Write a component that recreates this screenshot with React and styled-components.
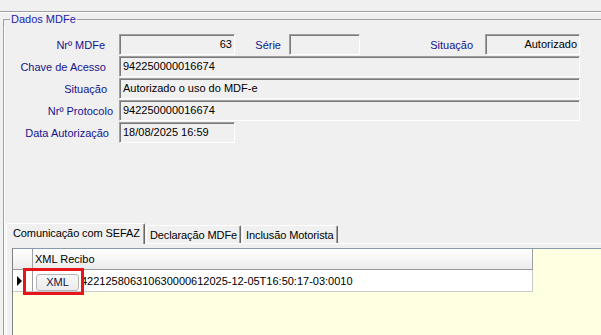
import styled, { createGlobalStyle } from "styled-components";

const GlobalStyle = createGlobalStyle`
  html, body {
    margin: 0;
    padding: 0;
    background: #f0f0f0;
  }
  body {
    font-family: "Liberation Sans", Arial, sans-serif;
    font-size: 11px;
    color: #000;
  }
`;

const Screen = styled.div`
  width: 601px;
  height: 335px;
  overflow: hidden;
  background: #f0f0f0;
  display: flex;
  flex-direction: column;
`;

const TopStrip = styled.div`
  flex: none;
  height: 11px;
  border-bottom: 1px solid #a0a0a0;
  box-shadow: 0 1px 0 #fff;
`;

const GroupBox = styled.fieldset`
  flex: none;
  margin: 1px 0 0 3px;
  padding: 0;
  width: 640px;
  min-width: 0;
  height: 340px;
  box-sizing: border-box;
  border: 1px solid #a0a0a0;
`;

const GroupTitle = styled.legend`
  margin-left: 6px;
  padding: 0 1px;
  line-height: 13px;
  color: #1c1cb0;
`;

const Body = styled.div`
  height: 314px;
  display: flex;
  flex-direction: column;
  border-left: 1px solid #fff;
`;

const Form = styled.div`
  margin-top: 8px;
  display: flex;
  flex-direction: column;
  gap: 1px;
`;

const Row = styled.div`
  display: flex;
  align-items: center;
  height: 21px;
`;

const Label = styled.span`
  flex: none;
  width: ${(p) => p.$w || 114}px;
  padding-right: ${(p) => p.$pr || 0}px;
  box-sizing: border-box;
  text-align: right;
  white-space: nowrap;
  color: #14148c;
`;

const Field = styled.div`
  flex: none;
  width: ${(p) => p.$w}px;
  height: 21px;
  box-sizing: border-box;
  padding: 0 2px 0 3px;
  border: 1px solid;
  border-color: #a0a0a0 #fff #fff #a0a0a0;
  box-shadow: inset 1px 1px 0 #7a7a7a;
  background: #f0f0f0;
  line-height: 19px;
  text-align: ${(p) => (p.$right ? "right" : "left")};
  white-space: nowrap;
  overflow: hidden;
`;

const TabControl = styled.div`
  flex: 1;
  margin: 79px 0 0 1px;
  display: flex;
  flex-direction: column;
`;

const TabStrip = styled.div`
  flex: none;
  display: flex;
  align-items: flex-end;
  height: 21px;
  gap: 1px;
`;

const Tab = styled.div`
  position: relative;
  z-index: ${(p) => (p.$active ? 2 : 1)};
  height: ${(p) => (p.$active ? 21 : 18)}px;
  padding: ${(p) => (p.$active ? "0 4px 0 6px" : "0 3px")};
  margin-bottom: ${(p) => (p.$active ? -1 : 0)}px;
  box-sizing: border-box;
  display: flex;
  align-items: center;
  padding-bottom: ${(p) => (p.$active ? 2 : 0)}px;
  border: 1px solid;
  border-bottom: none;
  border-color: #fff #696969 transparent #fff;
  box-shadow: inset -1px 0 0 #a0a0a0;
  border-radius: 2px 2px 0 0;
  background: #f0f0f0;
  white-space: nowrap;
  letter-spacing: -0.1px;
`;

const TabSheet = styled.div`
  flex: 1;
  display: flex;
  flex-direction: column;
  padding: 4px 0 0 5px;
  border-top: 1px solid #fff;
  border-left: 1px solid #fff;
`;

const Grid = styled.div`
  flex: 1;
  border-top: 1px solid #8a9aae;
  border-left: 1px solid #808080;
  background: #ffffe1;
`;

const GridTable = styled.div`
  width: 520px;
  display: flex;
  flex-direction: column;
`;

const HeaderRow = styled.div`
  display: flex;
  height: 21px;
  box-sizing: border-box;
  border-bottom: 1px solid #9a9a9a;
  border-right: 1px solid #a0a0a0;
  background: linear-gradient(#ffffff, #f4f4f4 60%, #ebebeb);
`;

const DataRow = styled.div`
  position: relative;
  display: flex;
  height: 22px;
  box-sizing: border-box;
  border-bottom: 1px solid #c8c8c8;
  border-right: 1px solid #c8c8c8;
  background: #fff;
`;

const IndicatorCell = styled.div`
  flex: none;
  width: 20px;
  border-right: 1px solid #a0a0a0;
  display: flex;
  align-items: center;
  padding-left: 4px;
  box-sizing: border-box;
`;

const HeaderCell = styled.div`
  flex: 1;
  padding-left: 2px;
  line-height: 20px;
`;

const DataCell = styled.div`
  flex: 1;
  display: flex;
  align-items: flex-start;
  padding: 4px 0 0 3px;
  white-space: nowrap;
  overflow: hidden;
`;

const XmlButton = styled.button`
  flex: none;
  width: 43px;
  height: 17px;
  margin: 0 2px 0 0;
  padding: 0;
  border: 1px solid #b4b4b4;
  border-radius: 3px;
  background: linear-gradient(#f7f7f7, #ececec);
  font-family: inherit;
  font-size: 11px;
  color: #101040;
  line-height: 15px;
`;

const CellText = styled.span`
  line-height: 15px;
`;

const Highlight = styled.div`
  position: absolute;
  left: 10px;
  top: -2px;
  width: 61px;
  height: 27px;
  box-sizing: border-box;
  border: 3px solid #e8141c;
  pointer-events: none;
`;

export default function App() {
  return (
    <>
      <GlobalStyle />
      <Screen>
        <TopStrip />
        <GroupBox>
          <GroupTitle>Dados MDFe</GroupTitle>
          <Body>
            <Form>
              <Row>
                <Label $pr={14}>Nrº MDFe</Label>
                <Field $w={116} $right>63</Field>
                <Label $w={54} $pr={8}>Série</Label>
                <Field $w={71} />
                <Label $w={125} $pr={12}>Situação</Label>
                <Field $w={95} $right>Autorizado</Field>
              </Row>
              <Row>
                <Label $pr={13}>Chave de Acesso</Label>
                <Field $w={461}>942250000016674</Field>
              </Row>
              <Row>
                <Label $pr={12}>Situação</Label>
                <Field $w={461}>Autorizado o uso do MDF-e</Field>
              </Row>
              <Row>
                <Label $pr={6}>Nrº Protocolo</Label>
                <Field $w={461}>942250000016674</Field>
              </Row>
              <Row>
                <Label $pr={10}>Data Autorização</Label>
                <Field $w={116}>18/08/2025 16:59</Field>
              </Row>
            </Form>

            <TabControl>
              <TabStrip>
                <Tab $active>Comunicação com SEFAZ</Tab>
                <Tab>Declaração MDFe</Tab>
                <Tab>Inclusão Motorista</Tab>
              </TabStrip>
              <TabSheet>
                <Grid>
                  <GridTable>
                    <HeaderRow>
                      <IndicatorCell />
                      <HeaderCell>XML Recibo</HeaderCell>
                    </HeaderRow>
                    <DataRow>
                      <IndicatorCell>
                        <svg width="6" height="10" viewBox="0 0 6 10">
                          <path d="M0 0 L5 5 L0 10 Z" fill="#000" />
                        </svg>
                      </IndicatorCell>
                      <DataCell>
                        <XmlButton>XML</XmlButton>
                        <CellText>422125806310630000612025-12-05T16:50:17-03:0010</CellText>
                      </DataCell>
                      <Highlight />
                    </DataRow>
                  </GridTable>
                </Grid>
              </TabSheet>
            </TabControl>
          </Body>
        </GroupBox>
      </Screen>
    </>
  );
}
